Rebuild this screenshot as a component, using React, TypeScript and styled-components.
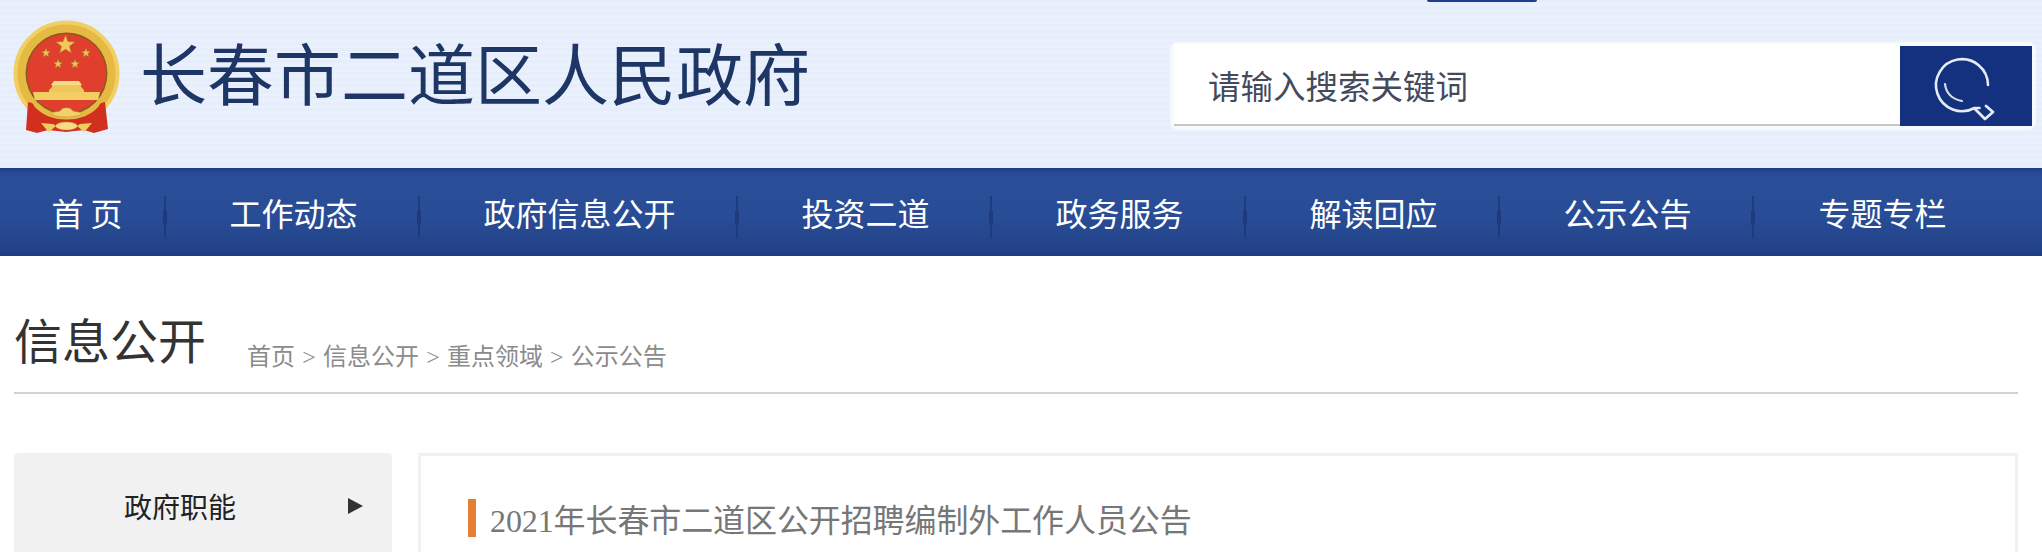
import * as React from "react";
import styled, { createGlobalStyle } from "styled-components";

const NAV_ITEMS = [
  { label: "首 页", width: 166 },
  { label: "工作动态", width: 254 },
  { label: "政府信息公开", width: 318 },
  { label: "投资二道", width: 254 },
  { label: "政务服务", width: 254 },
  { label: "解读回应", width: 254 },
  { label: "公示公告", width: 254 },
  { label: "专题专栏", width: 256 },
];

function starPoints(cx: number, cy: number, r: number) {
  const pts: string[] = [];
  for (let i = 0; i < 10; i++) {
    const rad = i % 2 === 0 ? r : r * 0.42;
    const a = (Math.PI / 5) * i - Math.PI / 2;
    pts.push(`${(cx + rad * Math.cos(a)).toFixed(2)},${(cy + rad * Math.sin(a)).toFixed(2)}`);
  }
  return pts.join(" ");
}

function Emblem() {
  return (
    <svg width="107" height="114" viewBox="0 0 107 114" style={{ filter: "blur(0.7px)" }}>
      <circle cx="53.5" cy="53.5" r="51" fill="#e6ba42" stroke="#f0cf63" strokeWidth="4" />
      <circle cx="53.5" cy="53.5" r="41" fill="#8a5a20" />
      <circle cx="53.5" cy="53.5" r="39.5" fill="#df3f2c" />
      <polygon points={starPoints(52.5, 25, 10)} fill="#f0c958" stroke="#a9772a" strokeWidth="0.6" />
      <polygon points={starPoints(33, 33, 4.8)} fill="#ecc355" stroke="#a9772a" strokeWidth="0.5" />
      <polygon points={starPoints(73, 33, 4.8)} fill="#ecc355" stroke="#a9772a" strokeWidth="0.5" />
      <polygon points={starPoints(45, 44, 4.8)} fill="#ecc355" stroke="#a9772a" strokeWidth="0.5" />
      <polygon points={starPoints(62, 44, 4.8)} fill="#ecc355" stroke="#a9772a" strokeWidth="0.5" />
      <path d="M41 61h25l3 4H38z" fill="#f6db80" />
      <path d="M39 65h29v2l3 3v2H36v-2l3-3z" fill="#eec65e" />
      <path d="M20 72h67l-2 8H22z" fill="#f3cf62" />
      <path d="M15 82l4 1c7 9 19 16 34.500 16S81 92 88 83l4-1 3 27-14 4-10-3-18 2-18-2-11 3-11-3z" fill="#d1301e" />
      <path d="M22 85c8 9 19 13 31.500 13S77 94 85 85" fill="none" stroke="#e6ba42" strokeWidth="3" />
      <path d="M38 94c5-4 8-1 10-4 2-3 9-3 11 0 2 3 5 0 10 4-6 4-25 4-31 0z" fill="#f2d06a" stroke="#b98a30" strokeWidth="0.5" />
      <path d="M28 103l12 1 3 2-7 6-3-3zM79 103l-12 1-3 2 7 6 3-3z" fill="#f0cc5f" />
      <ellipse cx="53.5" cy="106" rx="11" ry="4" fill="#f6dc86" stroke="#c4932f" strokeWidth="0.5" />
    </svg>
  );
}

function SearchGlyph() {
  return (
    <svg width="70" height="70" viewBox="0 0 70 70" fill="none" strokeLinecap="round" style={{ filter: "blur(0.35px)" }}>
      <path d="M60 35A26 26 0 1 0 46.500 58l5 0" stroke="#e6ebf5" strokeWidth="2.6" transform="translate(-3 -1)" />
      <path d="M17 34c1 9 7 15 17 17" stroke="#d7deee" strokeWidth="2.2" transform="translate(-3 -1)" />
      <path d="M44 58l10 10 8-7-7-6" stroke="#e6ebf5" strokeWidth="2.8" strokeLinejoin="round" />
    </svg>
  );
}

export default function App() {
  return (
    <Page>
      <GlobalStyle />
      <Header>
        <TopTab />
        <Brand>
          <Emblem />
          <SiteName>长春市二道区人民政府</SiteName>
        </Brand>
        <SearchBox>
          <SearchInput>请输入搜索关键词</SearchInput>
          <SearchButton>
            <SearchGlyph />
          </SearchButton>
        </SearchBox>
      </Header>
      <Nav>
        {NAV_ITEMS.map((item, i) => (
          <NavItem key={item.label} $width={item.width} $first={i === 0} $divider={i < NAV_ITEMS.length - 1}>
            {item.label}
          </NavItem>
        ))}
      </Nav>
      <Crumbs>
        <SectionTitle>信息公开</SectionTitle>
        <CrumbTrail>首页 &gt; 信息公开 &gt; 重点领域 &gt; 公示公告</CrumbTrail>
      </Crumbs>
      <Content>
        <Sidebar>
          <SideItem>
            <span>政府职能</span>
            <Arrow />
          </SideItem>
        </Sidebar>
        <Article>
          <ArticleTitle>2021年长春市二道区公开招聘编制外工作人员公告</ArticleTitle>
        </Article>
      </Content>
    </Page>
  );
}

const GlobalStyle = createGlobalStyle`
  html, body {
    margin: 0;
    padding: 0;
    background: #fff;
    overflow: hidden;
  }
`;

const Page = styled.div`
  width: 2042px;
  height: 552px;
  overflow: hidden;
  font-family: "Liberation Serif", "Noto Sans CJK SC", serif;
`;

const Header = styled.header`
  position: relative;
  height: 168px;
  box-sizing: border-box;
  padding: 20px 6px 0 13px;
  display: flex;
  justify-content: space-between;
  align-items: flex-start;
  background: repeating-linear-gradient(180deg, #e7eefb 0, #e7eefb 3px, #ebf1fc 3px, #ebf1fc 6px);
`;

const TopTab = styled.div`
  position: absolute;
  left: 1427px;
  top: 0;
  width: 110px;
  height: 2px;
  background: #1f3f8c;
  border-radius: 0 0 5px 5px;
`;

const Brand = styled.div`
  display: flex;
  align-items: flex-start;
`;

const SiteName = styled.div`
  margin: 12px 0 0 20px;
  font-family: "Noto Sans CJK SC", sans-serif;
  font-size: 67px;
  line-height: 78px;
  font-weight: 400;
  color: #1d3666;
  white-space: nowrap;
`;

const SearchBox = styled.div`
  margin-top: 22px;
  width: 866px;
  height: 88px;
  box-sizing: border-box;
  padding: 2px 4px 4px;
  display: flex;
  background: #f6f9fe;
  border-radius: 8px;
`;

const SearchInput = styled.div`
  flex: 1;
  box-sizing: border-box;
  padding-left: 34px;
  display: flex;
  align-items: center;
  background: #fff;
  border-bottom: 2px solid #c6c6c6;
  font-family: "Noto Sans CJK SC", sans-serif;
  font-size: 32.5px;
  color: #444a5c;
`;

const SearchButton = styled.div`
  width: 132px;
  margin-top: 2px;
  display: flex;
  align-items: center;
  justify-content: center;
  background: #14317f;
`;

const Nav = styled.nav`
  height: 88px;
  box-sizing: border-box;
  display: flex;
  align-items: center;
  background: linear-gradient(180deg, #21458f 0, #2a4f98 8%, #284c95 55%, #234389 92%, #1d3c80 100%);
  border-top: 2px solid #1e3f8a;
`;

const NavItem = styled.div<{ $width: number; $first: boolean; $divider: boolean }>`
  position: relative;
  width: ${(p) => p.$width}px;
  height: 100%;
  box-sizing: border-box;
  padding: 0 0 2px ${(p) => (p.$first ? 8 : 1)}px;
  display: flex;
  align-items: center;
  justify-content: center;
  font-family: "Noto Sans CJK SC", sans-serif;
  font-size: 32px;
  color: #fff;
  white-space: pre;

  &::after {
    content: "";
    display: ${(p) => (p.$divider ? "block" : "none")};
    position: absolute;
    right: 0;
    top: 26px;
    width: 2px;
    height: 42px;
    background: #1f3b7d;
  }

  &::before {
    content: "";
    display: ${(p) => (p.$divider ? "block" : "none")};
    position: absolute;
    right: -1px;
    top: 40px;
    width: 4px;
    height: 15px;
    border-radius: 1px;
    background: #1d3a7d;
  }
`;

const Crumbs = styled.div`
  margin: 0 24px 0 14px;
  height: 138px;
  box-sizing: border-box;
  padding: 47px 0 0;
  display: flex;
  align-items: flex-start;
  border-bottom: 2px solid #d2d2d2;
`;

const SectionTitle = styled.h1`
  margin: 0;
  font-family: "Noto Sans CJK SC", sans-serif;
  font-size: 48px;
  line-height: 70px;
  font-weight: 400;
  color: #333;
  white-space: nowrap;
`;

const CrumbTrail = styled.div`
  margin: 37px 0 0 41px;
  font-size: 24px;
  line-height: 34px;
  word-spacing: 1.2px;
  color: #8b8b8b;
  white-space: nowrap;
`;

const Content = styled.div`
  margin: 59px 24px 0 14px;
  display: flex;
  gap: 26px;
`;

const Sidebar = styled.aside`
  width: 378px;
  height: 200px;
  flex: none;
  background: #f1f1f1;
  border-radius: 4px;
`;

const SideItem = styled.div`
  height: 106px;
  box-sizing: border-box;
  padding: 0 29px 0 110px;
  display: flex;
  align-items: center;
  justify-content: space-between;
  font-family: "Noto Sans CJK SC", sans-serif;
  font-size: 28px;
  color: #222;
`;

const Arrow = styled.i`
  width: 0;
  height: 0;
  border-left: 15px solid #333;
  border-top: 8px solid transparent;
  border-bottom: 8px solid transparent;
`;

const Article = styled.main`
  flex: 1;
  height: 200px;
  box-sizing: border-box;
  padding: 43px 0 0 47px;
  border: 3px solid #f1f1f1;
`;

const ArticleTitle = styled.h2`
  margin: 0;
  height: 38px;
  padding-left: 14px;
  display: flex;
  align-items: center;
  border-left: 8px solid #e67e33;
  font-size: 32px;
  letter-spacing: -0.1px;
  font-weight: 400;
  color: #777;
  white-space: nowrap;
`;
